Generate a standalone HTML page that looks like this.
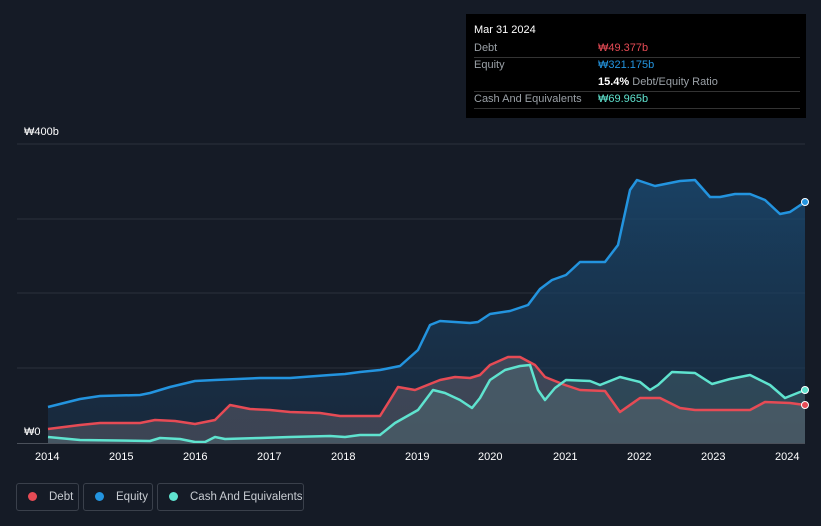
<!DOCTYPE html><html><head><style>
body{margin:0;background:#151b26;font-family:"Liberation Sans",sans-serif;width:821px;height:526px;overflow:hidden;position:relative}
.tt{position:absolute;left:466px;top:14px;width:340px;height:104px;background:#000;color:#fff;font-size:11px}
.tt .r{position:absolute;left:8px;right:6px;border-bottom:1px solid #333;height:17px;line-height:17px;color:#9aa0a6}
.tt .v{position:absolute;left:124px}
.lg{position:absolute;top:483px;height:28px;border:1px solid #3a404b;border-radius:3px;color:#c8ccd2;font-size:11.5px;line-height:26px;box-sizing:border-box;white-space:nowrap}
.lg i{display:inline-block;width:9px;height:9px;border-radius:50%;margin:0 12px 0 11px;vertical-align:-1px}
.ax{position:absolute;color:#fff;font-size:11px}
</style></head><body>
<svg width="821" height="526" style="position:absolute;left:0;top:0">
<defs><linearGradient id="g" x1="0" y1="0" x2="0" y2="1"><stop offset="0" stop-color="#1a4a72" stop-opacity=".8"/><stop offset="1" stop-color="#1a3550" stop-opacity=".5"/></linearGradient></defs>
<g stroke="#2a313c" stroke-width="1"><line x1="17" x2="805" y1="144" y2="144"/><line x1="17" x2="805" y1="219" y2="219"/><line x1="17" x2="805" y1="293" y2="293"/><line x1="17" x2="805" y1="368" y2="368"/></g>
<path fill="url(#g)" d="M48,407 L80,399 L100,396 L140,395 L150,393 L170,387 L195,381 L215,380 L260,378 L290,378 L330,375 L345,374 L360,372 L380,370 L400,366 L418,350 L430,325 L440,321 L470,323 L478,322 L490,314 L510,311 L528,305 L540,289 L552,280 L566,275 L580,262 L605,262 L618,245 L630,190 L637,180 L655,186 L680,181 L695,180 L710,197 L720,197 L735,194 L750,194 L765,200 L780,214 L790,212 L805,202 L805,443 L48,443Z"/>
<path fill="#6b6570" fill-opacity=".45" d="M48,429 L80,425 L100,423 L140,423 L155,420 L175,421 L195,424 L215,420 L230,405 L250,409 L270,410 L290,412 L320,413 L340,416 L380,416 L390,400 L398,387 L415,390 L440,380 L455,377 L470,378 L480,375 L490,365 L508,357 L520,357 L535,365 L545,377 L565,385 L580,390 L605,391 L620,412 L640,398 L660,398 L680,408 L695,410 L750,410 L765,402 L790,403 L805,405 L805,443 L48,443Z"/>
<path fill="#5a7a80" fill-opacity=".35" d="M48,437 L80,440 L150,441 L160,438 L180,439 L195,442 L205,442 L215,437 L225,439 L260,438 L290,437 L330,436 L345,437 L360,435 L380,435 L395,423 L418,410 L433,390 L445,393 L460,400 L472,408 L480,398 L490,380 L505,370 L520,366 L530,365 L538,390 L545,400 L555,388 L566,380 L590,381 L600,385 L620,377 L640,382 L650,390 L658,385 L672,372 L695,373 L712,384 L730,379 L750,375 L770,385 L785,398 L805,390 L805,443 L48,443Z"/>
<g fill="none" stroke-width="2.5" stroke-linejoin="round">
<path stroke="#2394df" d="M48,407 L80,399 L100,396 L140,395 L150,393 L170,387 L195,381 L215,380 L260,378 L290,378 L330,375 L345,374 L360,372 L380,370 L400,366 L418,350 L430,325 L440,321 L470,323 L478,322 L490,314 L510,311 L528,305 L540,289 L552,280 L566,275 L580,262 L605,262 L618,245 L630,190 L637,180 L655,186 L680,181 L695,180 L710,197 L720,197 L735,194 L750,194 L765,200 L780,214 L790,212 L805,202"/>
<path stroke="#e64b55" d="M48,429 L80,425 L100,423 L140,423 L155,420 L175,421 L195,424 L215,420 L230,405 L250,409 L270,410 L290,412 L320,413 L340,416 L380,416 L390,400 L398,387 L415,390 L440,380 L455,377 L470,378 L480,375 L490,365 L508,357 L520,357 L535,365 L545,377 L565,385 L580,390 L605,391 L620,412 L640,398 L660,398 L680,408 L695,410 L750,410 L765,402 L790,403 L805,405"/>
<path stroke="#5fe3cf" d="M48,437 L80,440 L150,441 L160,438 L180,439 L195,442 L205,442 L215,437 L225,439 L260,438 L290,437 L330,436 L345,437 L360,435 L380,435 L395,423 L418,410 L433,390 L445,393 L460,400 L472,408 L480,398 L490,380 L505,370 L520,366 L530,365 L538,390 L545,400 L555,388 L566,380 L590,381 L600,385 L620,377 L640,382 L650,390 L658,385 L672,372 L695,373 L712,384 L730,379 L750,375 L770,385 L785,398 L805,390"/>
</g>
<line x1="17" x2="805" y1="443.5" y2="443.5" stroke="#4a505a"/>
<circle cx="805" cy="202" r="3.5" fill="#2394df" stroke="#fff" stroke-width="1"/>
<circle cx="805" cy="405" r="3.5" fill="#e64b55" stroke="#fff" stroke-width="1"/>
<circle cx="805" cy="390" r="3.5" fill="#5fe3cf" stroke="#fff" stroke-width="1"/>
</svg>
<div class="ax" style="left:24px;top:126px">₩400b</div>
<div class="ax" style="left:24px;top:426px">₩0</div>
<div class="ax" style="left:35px;top:451px">2014</div><div class="ax" style="left:109px;top:451px">2015</div><div class="ax" style="left:183px;top:451px">2016</div><div class="ax" style="left:257px;top:451px">2017</div><div class="ax" style="left:331px;top:451px">2018</div><div class="ax" style="left:405px;top:451px">2019</div><div class="ax" style="left:478px;top:451px">2020</div><div class="ax" style="left:553px;top:451px">2021</div><div class="ax" style="left:627px;top:451px">2022</div><div class="ax" style="left:701px;top:451px">2023</div><div class="ax" style="left:775px;top:451px">2024</div>
<div class="tt">
<div style="position:absolute;left:8px;top:10px;color:#fff">Mar 31 2024</div>
<div class="r" style="top:26px">Debt<span class="v" style="color:#e64b55">₩49.377b</span></div>
<div class="r" style="top:43px;border:none">Equity<span class="v" style="color:#2394df">₩321.175b</span></div>
<div class="r" style="top:60px"><span class="v" style="color:#fff"><b>15.4%</b> <span style="color:#9aa0a6">Debt/Equity Ratio</span></span></div>
<div class="r" style="top:77px">Cash And Equivalents<span class="v" style="color:#5fe3cf">₩69.965b</span></div>
</div>
<div class="lg" style="left:16px;width:63px"><i style="background:#e64b55"></i>Debt</div>
<div class="lg" style="left:83px;width:70px"><i style="background:#2394df"></i>Equity</div>
<div class="lg" style="left:157px;width:147px"><i style="background:#5fe3cf"></i>Cash And Equivalents</div>
</body></html>
